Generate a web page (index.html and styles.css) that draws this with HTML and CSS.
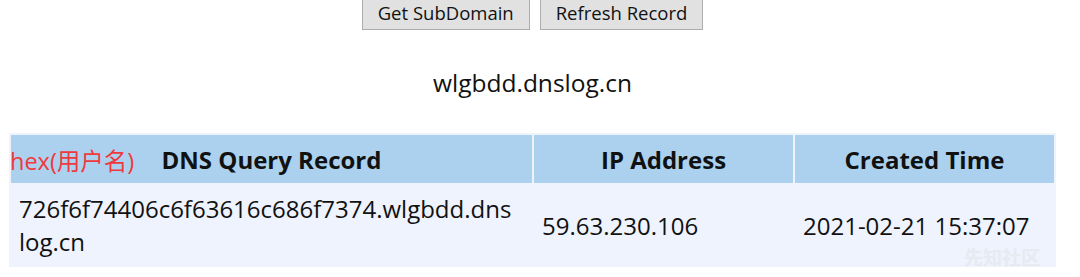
FILE: index.html
```html
<!DOCTYPE html>
<html lang="en">
<head>
  <meta charset="UTF-8">
  <title>DNSLog Platform</title>
  <link rel="stylesheet" href="styles.css">
</head>
<body>
  <div class="page">
    <div class="actions">
      <button class="btn">Get SubDomain</button>
      <button class="btn">Refresh Record</button>
    </div>

    <p class="domain">wlgbdd.dnslog.cn</p>

    <div class="records">
      <span class="note">hex(用户名)</span>
      <table>
        <thead>
          <tr>
            <th class="col-query">DNS Query Record</th>
            <th class="col-ip">IP Address</th>
            <th class="col-time">Created Time</th>
          </tr>
        </thead>
        <tbody>
          <tr>
            <td class="query">726f6f74406c6f63616c686f7374.wlgbdd.dnslog.cn</td>
            <td>59.63.230.106</td>
            <td>2021-02-21 15:37:07</td>
          </tr>
        </tbody>
      </table>
      <span class="mark">先知社区</span>
    </div>
  </div>
</body>
</html>
```

FILE: styles.css
```css
body {
  margin: 0;
  background: #fff;
  font-family: "Open Sans", "Noto Sans", Arial, "Noto Sans CJK SC", sans-serif;
  color: #111;
}
.page {
  width: 1065px;
}
.actions {
  display: flex;
  justify-content: center;
  gap: 10px;
  margin-top: -6px;
}
.btn {
  font-family: inherit;
  font-size: 18.5px;
  height: 36px;
  padding: 0 15px;
  background: #e1e1e1;
  border: 1px solid #adadad;
  color: #111;
}
.domain {
  text-align: center;
  font-size: 24.5px;
  line-height: 34px;
  margin: 36px 0 0;
}
.records {
  position: relative;
  margin: 33px 0 0 9px;
  width: 1047px;
}
table {
  width: 100%;
  table-layout: fixed;
  border-spacing: 2px;
  background: #eef3fd;
  font-size: 24px;
}
th {
  background: #abd1ee;
  height: 48px;
  padding: 0;
  font-weight: bold;
}
.col-query { width: 521px; }
.col-ip { width: 259px; }
td {
  height: 80px;
  padding: 0 8px;
  line-height: 33px;
}
.query {
  word-break: break-all;
  padding-right: 18px;
}
.note {
  position: absolute;
  left: 1px;
  top: 13px;
  color: #f0393c;
  font-size: 23.5px;
  line-height: 30px;
}
.mark {
  position: absolute;
  right: 16px;
  bottom: -4px;
  color: #e6eaf1;
  font-size: 19px;
  font-weight: bold;
}
```
